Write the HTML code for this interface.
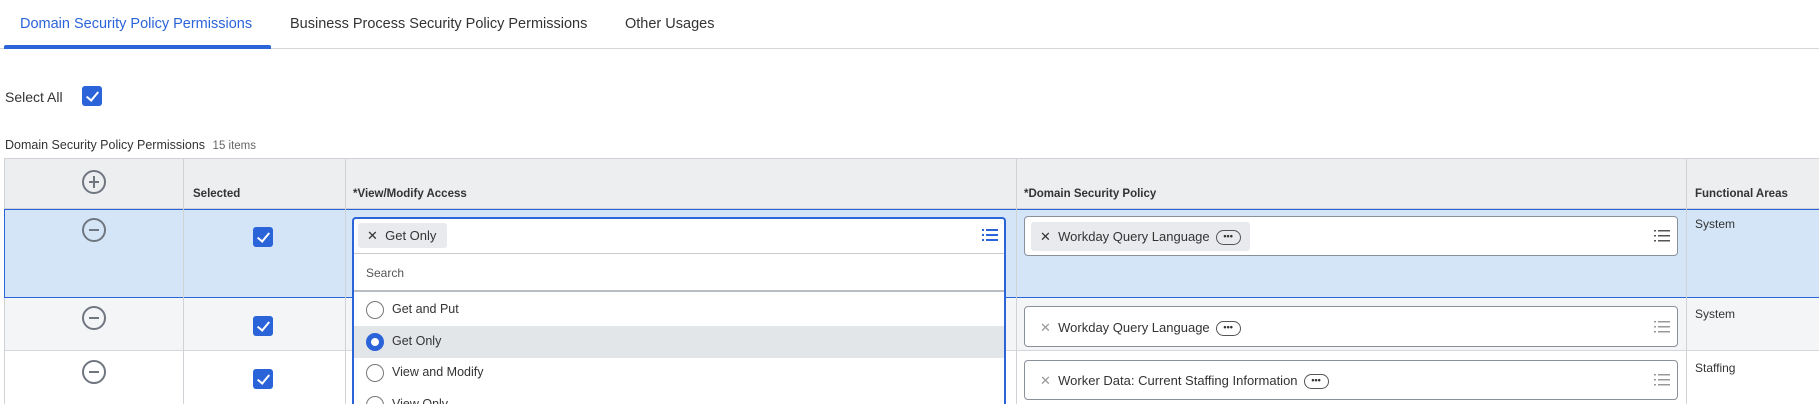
<!DOCTYPE html>
<html style="width:1819px;height:404px;overflow:hidden"><head><meta charset="utf-8"><style>
*{box-sizing:border-box;margin:0;padding:0}
body{width:1819px;height:404px;overflow:hidden;background:#fff;font-family:"Liberation Sans",sans-serif;color:#333;position:relative}
.a{position:absolute;white-space:nowrap}
.cb{position:absolute;width:20px;height:20px;background:#2b63d9;border-radius:3px}
.cb:after{content:"";position:absolute;left:7px;top:3px;width:5px;height:10px;border:solid #fff;border-width:0 2px 2px 0;transform:rotate(40deg)}
.circ{position:absolute;width:24px;height:24px;border:2px solid #6f7680;border-radius:50%}
.circ:before{content:"";position:absolute;left:5px;top:9px;width:10px;height:2px;background:#6f7680}
.plus:after{content:"";position:absolute;left:9px;top:4px;width:2px;height:12px;background:#6f7680}
.inp{position:absolute;background:#fff;border:1px solid #8a9099;border-radius:4px}
.pill{position:absolute;background:#e8eaed;border-radius:3px;font-size:13px;line-height:29px;padding-left:9px;color:#333}
.dots{display:inline-block;width:25px;height:15px;border:1.5px solid #555;border-radius:8px;vertical-align:middle;margin-left:6px;text-align:center;font-size:9px;line-height:10px;font-weight:bold}
.list{position:absolute;width:16px;height:14px}
.radio{position:absolute;width:18px;height:18px;border:1px solid #777;border-radius:50%;background:#fff}
.opt{position:absolute;font-size:12.5px}
.h{font-size:11.5px;font-weight:bold;color:#333}
</style></head><body>
<div class="a" style="left:20px;top:16px;font-size:14.5px;color:#2b63d9">Domain Security Policy Permissions</div>
<div class="a" style="left:290px;top:16px;font-size:14.5px;color:#333">Business Process Security Policy Permissions</div>
<div class="a" style="left:625px;top:16px;font-size:14.5px;color:#333">Other Usages</div>
<div class="a" style="left:0;top:48px;width:1819px;height:1px;background:#d5d7da"></div>
<div class="a" style="left:4px;top:45px;width:267px;height:4px;background:#2b63d9;border-radius:2px 2px 0 0"></div>
<div class="a" style="left:5px;top:89px;font-size:14px">Select All</div>
<div class="cb" style="left:82px;top:86px"></div>
<div class="a" style="left:5px;top:138px;font-size:12.5px">Domain Security Policy Permissions <span style="color:#666;font-size:11.5px;margin-left:4px">15 items</span></div>
<div class="a" style="left:4px;top:158px;width:1815px;height:51px;background:#eceef0;border:1px solid #cfd2d6;border-right:none"></div>
<div class="a" style="left:4px;top:209px;width:1815px;height:89px;background:#d4e5f8;border:1.5px solid #2b63d9;border-right:none"></div>
<div class="a" style="left:4px;top:298px;width:1815px;height:53px;background:#f4f5f6;border-bottom:1px solid #d5d7da;border-left:1px solid #cfd2d6"></div>
<div class="a" style="left:4px;top:351px;width:1815px;height:53px;background:#fff;border-left:1px solid #cfd2d6"></div>
<div class="a" style="left:183px;top:158px;width:1px;height:246px;background:#cfd2d6"></div>
<div class="a" style="left:345px;top:158px;width:1px;height:246px;background:#cfd2d6"></div>
<div class="a" style="left:1016px;top:158px;width:1px;height:246px;background:#cfd2d6"></div>
<div class="a" style="left:1686px;top:158px;width:1px;height:246px;background:#cfd2d6"></div>
<div class="a h" style="left:193px;top:188px">Selected</div>
<div class="a h" style="left:353px;top:188px">*View/Modify Access</div>
<div class="a h" style="left:1024px;top:188px">*Domain Security Policy</div>
<div class="a h" style="left:1695px;top:188px">Functional Areas</div>
<div class="circ plus" style="left:82px;top:170px"></div>
<div class="circ" style="left:82px;top:218px"></div>
<div class="circ" style="left:82px;top:306px"></div>
<div class="circ" style="left:82px;top:360px"></div>
<div class="cb" style="left:253px;top:227px"></div>
<div class="cb" style="left:253px;top:316px"></div>
<div class="cb" style="left:253px;top:369px"></div>
<div class="a" style="left:352px;top:217px;width:654px;height:187px;background:#fff;border:2px solid #2b63d9;border-bottom:none;border-radius:4px 4px 0 0"></div>
<div class="a" style="left:354px;top:253px;width:650px;height:1px;background:#c8ccd0"></div>
<div class="a" style="left:354px;top:290px;width:650px;height:2px;background:#b8bdc3"></div>
<div class="pill" style="left:358px;top:223px;width:89px;height:25px;line-height:25px">✕&nbsp; Get Only</div>
<svg class="list" style="left:982px;top:228px" viewBox="0 0 16 14"><g fill="#2b63d9"><rect x="0" y="1" width="2" height="2"/><rect x="4" y="1" width="12" height="2"/><rect x="0" y="6" width="2" height="2"/><rect x="4" y="6" width="12" height="2"/><rect x="0" y="11" width="2" height="2"/><rect x="4" y="11" width="12" height="2"/></g></svg>
<div class="a" style="left:366px;top:266px;font-size:12px;color:#555">Search</div>
<div class="a" style="left:354px;top:326px;width:650px;height:32px;background:#e3e6e9"></div>
<div class="radio" style="left:366px;top:301px"></div><div class="opt a" style="left:392px;top:302px">Get and Put</div>
<div class="radio" style="left:366px;top:333px;border:5px solid #2b63d9"></div><div class="opt a" style="left:392px;top:334px">Get Only</div>
<div class="radio" style="left:366px;top:364px"></div><div class="opt a" style="left:392px;top:365px">View and Modify</div>
<div class="radio" style="left:366px;top:396px"></div><div class="opt a" style="left:392px;top:397px">View Only</div>
<div class="inp" style="left:1024px;top:216px;width:654px;height:40px"></div>
<div class="pill" style="left:1031px;top:222px;width:219px;height:29px">✕&nbsp; Workday Query Language<span class="dots">•••</span></div>
<div class="inp" style="left:1024px;top:306px;width:654px;height:41px"></div>
<div class="a" style="left:1040px;top:320px;font-size:13px"><span style="color:#999">✕</span>&nbsp; Workday Query Language<span class="dots">•••</span></div>
<div class="inp" style="left:1024px;top:360px;width:654px;height:40px"></div>
<div class="a" style="left:1040px;top:373px;font-size:13px"><span style="color:#999">✕</span>&nbsp; Worker Data: Current Staffing Information<span class="dots">•••</span></div>
<svg class="list" style="left:1654px;top:229px" viewBox="0 0 16 14"><g fill="#555"><rect x="0" y="1" width="2" height="1.5"/><rect x="4" y="1" width="12" height="1.5"/><rect x="0" y="6" width="2" height="1.5"/><rect x="4" y="6" width="12" height="1.5"/><rect x="0" y="11" width="2" height="1.5"/><rect x="4" y="11" width="12" height="1.5"/></g></svg>
<svg class="list" style="left:1654px;top:320px" viewBox="0 0 16 14"><g fill="#999"><rect x="0" y="1" width="2" height="1.5"/><rect x="4" y="1" width="12" height="1.5"/><rect x="0" y="6" width="2" height="1.5"/><rect x="4" y="6" width="12" height="1.5"/><rect x="0" y="11" width="2" height="1.5"/><rect x="4" y="11" width="12" height="1.5"/></g></svg>
<svg class="list" style="left:1654px;top:373px" viewBox="0 0 16 14"><g fill="#999"><rect x="0" y="1" width="2" height="1.5"/><rect x="4" y="1" width="12" height="1.5"/><rect x="0" y="6" width="2" height="1.5"/><rect x="4" y="6" width="12" height="1.5"/><rect x="0" y="11" width="2" height="1.5"/><rect x="4" y="11" width="12" height="1.5"/></g></svg>
<div class="a" style="left:1695px;top:217px;font-size:12px">System</div>
<div class="a" style="left:1695px;top:307px;font-size:12px">System</div>
<div class="a" style="left:1695px;top:361px;font-size:12px">Staffing</div>
</body></html>
